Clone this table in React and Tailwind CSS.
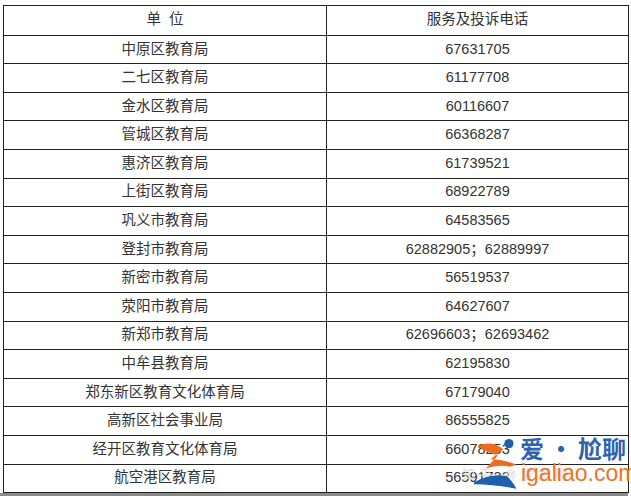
const rows = [
  ['中原区教育局', '67631705'],
  ['二七区教育局', '61177708'],
  ['金水区教育局', '60116607'],
  ['管城区教育局', '66368287'],
  ['惠济区教育局', '61739521'],
  ['上街区教育局', '68922789'],
  ['巩义市教育局', '64583565'],
  ['登封市教育局', '62882905；62889997'],
  ['新密市教育局', '56519537'],
  ['荥阳市教育局', '64627607'],
  ['新郑市教育局', '62696603；62693462'],
  ['中牟县教育局', '62195830'],
  ['郑东新区教育文化体育局', '67179040'],
  ['高新区社会事业局', '86555825'],
  ['经开区教育文化体育局', '66078253'],
  ['航空港区教育局', '56591733'],
];

// site watermark stamped over the bottom-right corner
function Watermark() {
  return (
    <div className="pointer-events-none absolute left-[472px] top-[434px] flex items-start">
      <span className="absolute left-[-10px] top-[31px] whitespace-nowrap text-[13px] tracking-[4px] text-[#dcdcdc]">知乎 @爱尬聊</span>
      <svg className="relative" width="48" height="58" viewBox="0 0 52 58">
        <circle cx="40" cy="8" r="5" fill="#1f5fae" />
        <path d="M6 11 C15 6 26 7 34 14 L20 25 C29 25 39 27 48 31 L41 33 C33 31 24 32 15 35 L28 21 C20 18 12 15 6 11 Z" fill="#ee6b1f" />
        <path d="M2 50 C14 43 26 41 37 43 C42 47 46 52 48 57 C35 54 18 52 2 52 Z" fill="#1f5fae" />
      </svg>
      <div className="relative flex flex-col">
        <div className="flex whitespace-nowrap font-['Noto_Sans_CJK_SC',sans-serif] text-[24px] font-bold leading-[27px] text-[#2d63ad]">
          <span>爱</span>
          <span className="mx-[5px]">·</span>
          <span>尬聊</span>
        </div>
        <div className="whitespace-nowrap pl-[1px] font-['Liberation_Sans',sans-serif] text-[23px] leading-[25px] text-[#ee7326]">igaliao.com</div>
      </div>
    </div>
  );
}

export default function App() {
  return (
    <div className="relative h-[500px] w-[631px] bg-white pl-[3px] pt-[5px] font-['Liberation_Sans','Noto_Sans_CJK_SC',sans-serif] text-[14.5px] text-[#333]">
      <div className="w-[626px] border border-[#222]">
        <div className="flex h-[28.6px] items-center">
          <div className="w-[322px] whitespace-pre text-center">单  位</div>
          <div className="flex h-full flex-1 items-center justify-center border-l border-[#222]">服务及投诉电话</div>
        </div>
        {rows.map(([name, phone]) => (
          <div key={name} className="flex h-[28.6px] items-center border-t border-[#222]">
            <div className="w-[322px] text-center">{name}</div>
            <div className="flex h-full flex-1 items-center justify-center border-l border-[#222]">{phone}</div>
          </div>
        ))}
      </div>
      <div className="-ml-[3px] h-[3px] w-[628px] bg-[#8a8a8a]" />
      <Watermark />
    </div>
  );
}
